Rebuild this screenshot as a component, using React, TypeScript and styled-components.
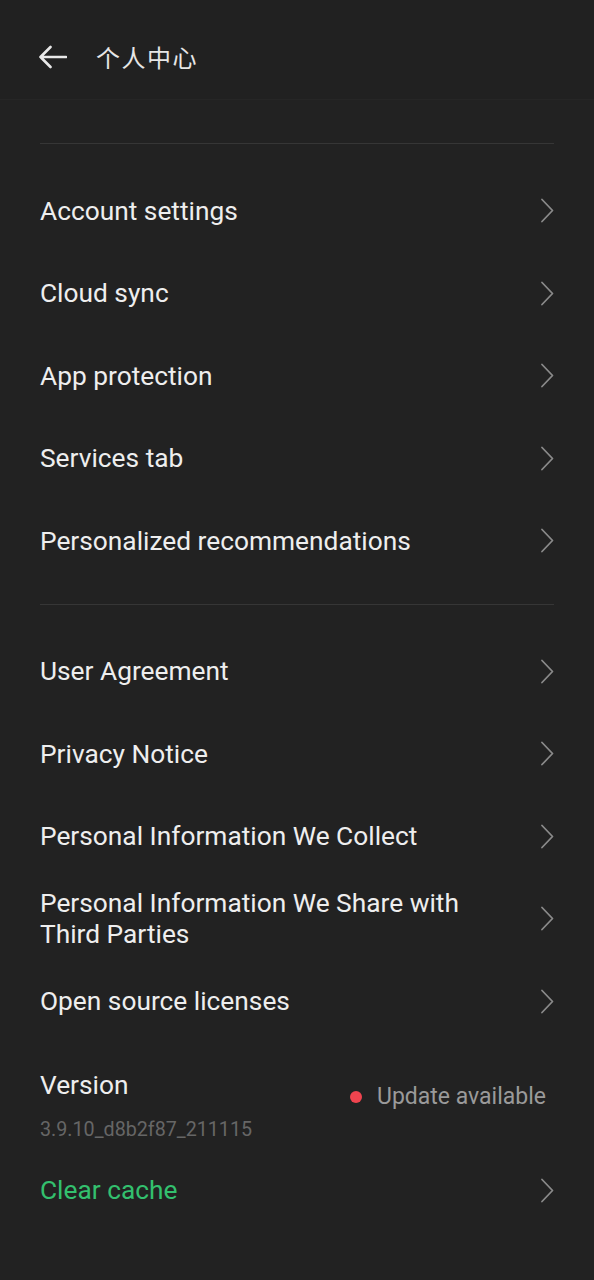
import React from "react";
import styled, { createGlobalStyle } from "styled-components";

const Global = createGlobalStyle`
  html, body { margin: 0; padding: 0; background: #222222; }
  body { font-family: Roboto, "Noto Sans CJK SC", sans-serif; -webkit-font-smoothing: antialiased; }
  * { box-sizing: border-box; }
`;

const Page = styled.div`
  width: 594px;
  min-height: 1280px;
  background: #222222;
  color: #eeeeee;
`;

const Header = styled.header`
  height: 100px;
  display: flex;
  align-items: center;
  padding: 15px 0 0 38px;
  gap: 29px;
  border-bottom: 1px solid #262626;
  background: #212121;
`;

const BackButton = styled.button`
  display: flex;
  align-items: center;
  justify-content: center;
  padding: 0;
  margin: 0;
  border: none;
  background: none;
  width: 29px;
  height: 24px;
`;

const Title = styled.h1`
  margin: 0;
  font-family: "Noto Sans CJK SC", Roboto, sans-serif;
  font-weight: 400;
  font-size: 24px;
  letter-spacing: 1.5px;
  color: #e6e6e6;
  line-height: 1;
`;

const Content = styled.main`
  padding: 43px 40px 0 40px;
`;

const Divider = styled.hr<{ $after?: number }>`
  margin: 0 0 ${(p) => p.$after ?? 26}px 0;
  border: none;
  height: 1px;
  background: #363636;
`;

const Group = styled.section<{ $bottom?: number }>`
  display: flex;
  flex-direction: column;
  margin-bottom: ${(p) => p.$bottom ?? 0}px;
`;

const Row = styled.div`
  height: 82.5px;
  display: flex;
  align-items: center;
  justify-content: space-between;
`;

const Label = styled.span<{ $accent?: boolean }>`
  font-size: 26.3px;
  line-height: 31px;
  color: ${(p) => (p.$accent ? "#33c06e" : "#eeeeee")};
  max-width: 460px;
`;

const VersionBlock = styled.div`
  display: flex;
  justify-content: space-between;
  align-items: flex-start;
  padding: 27px 8px 8px 0;
`;

const VersionText = styled.div`
  display: flex;
  flex-direction: column;
`;

const VersionTitle = styled.span`
  font-size: 26.3px;
  line-height: 31px;
  color: #eeeeee;
`;

const VersionNumber = styled.span`
  margin-top: 16.5px;
  font-size: 19.7px;
  line-height: 24px;
  color: #666666;
`;

const Update = styled.div`
  display: flex;
  align-items: center;
  gap: 15px;
  margin-top: 14px;
  font-size: 23px;
  line-height: 26px;
  color: #9a9a9a;
`;

const Dot = styled.span`
  width: 12px;
  height: 12px;
  border-radius: 50%;
  background: #f0444f;
`;

const Chevron = () => (
  <svg width="14" height="26" viewBox="0 0 14 26" fill="none">
    <polyline points="2,1.5 12.5,12.5 2,23.5" stroke="#8a8a8a" strokeWidth="1.8" strokeLinecap="round" strokeLinejoin="round" />
  </svg>
);

const BackArrow = () => (
  <svg width="29" height="24" viewBox="0 0 29 24" fill="none">
    <path d="M28 12H2.5M12.5 2L2.5 12L12.5 22" stroke="#e8e8e8" strokeWidth="2.6" strokeLinecap="round" strokeLinejoin="round" />
  </svg>
);

const group1 = ["Account settings", "Cloud sync", "App protection", "Services tab", "Personalized recommendations"];
const group2 = [
  "User Agreement",
  "Privacy Notice",
  "Personal Information We Collect",
  "Personal Information We Share with Third Parties",
  "Open source licenses",
];

export default function App() {
  return (
    <Page>
      <Global />
      <Header>
        <BackButton aria-label="back">
          <BackArrow />
        </BackButton>
        <Title>个人中心</Title>
      </Header>
      <Content>
        <Divider />
        <Group $bottom={21}>
          {group1.map((t) => (
            <Row key={t}>
              <Label>{t}</Label>
              <Chevron />
            </Row>
          ))}
        </Group>
        <Divider />
        <Group>
          {group2.map((t) => (
            <Row key={t}>
              <Label>{t}</Label>
              <Chevron />
            </Row>
          ))}
        </Group>
        <VersionBlock>
          <VersionText>
            <VersionTitle>Version</VersionTitle>
            <VersionNumber>3.9.10_d8b2f87_211115</VersionNumber>
          </VersionText>
          <Update>
            <Dot />
            <span>Update available</span>
          </Update>
        </VersionBlock>
        <Row>
          <Label $accent>Clear cache</Label>
          <Chevron />
        </Row>
      </Content>
    </Page>
  );
}
